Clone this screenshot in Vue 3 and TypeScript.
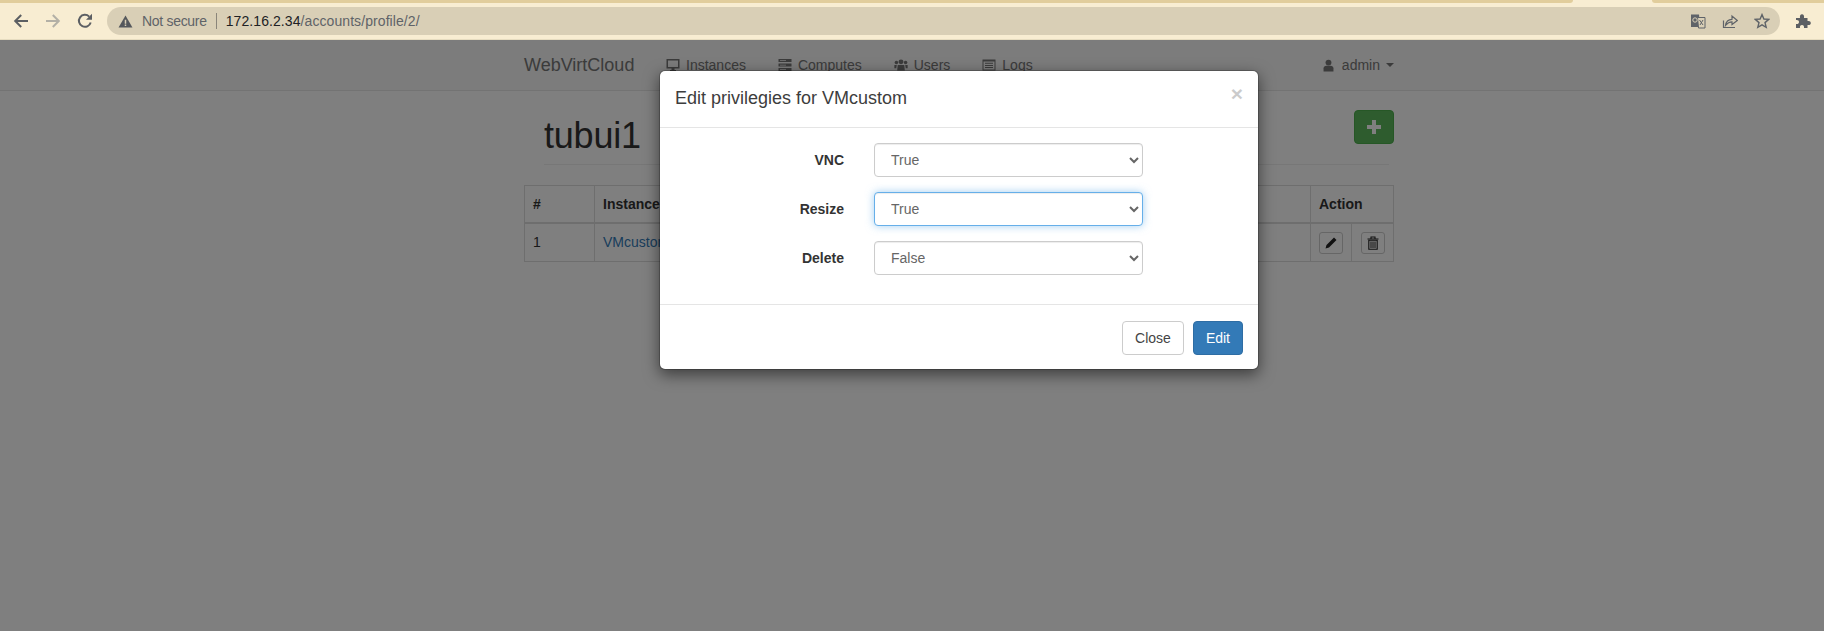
<script setup lang="ts">
import { ref } from "vue";

interface Privilege {
  label: string;
  value: string;
  focused?: boolean;
}

const url = { host: "172.16.2.34", path: "/accounts/profile/2/" };

const privileges = ref<Privilege[]>([
  { label: "VNC", value: "True" },
  { label: "Resize", value: "True", focused: true },
  { label: "Delete", value: "False" },
]);
</script>

<template>
  <div class="shot">
    <!-- browser toolbar -->
    <header class="chrome">
      <div class="chrome__strip">
        <span class="chrome__tab chrome__tab--left"></span>
        <span class="chrome__tab chrome__tab--right"></span>
      </div>
      <div class="chrome__bar">
        <svg class="tool" viewBox="0 0 16 16" width="16" height="16">
          <path d="M15 8H2.5M8.2 2L2.2 8L8.2 14" fill="none" stroke="#5c5f63" stroke-width="2" />
        </svg>
        <svg class="tool" viewBox="0 0 16 16" width="16" height="16">
          <path d="M1 8H13.5M7.8 2L13.8 8L7.8 14" fill="none" stroke="#b3b0a6" stroke-width="2" />
        </svg>
        <svg class="tool" viewBox="0 0 16 16" width="16" height="16">
          <path d="M13.7 9.5A6 6 0 1 1 12.2 3.6" fill="none" stroke="#5c5f63" stroke-width="2" />
          <path d="M15 0.8V6.8H9z" fill="#5c5f63" />
        </svg>
        <div class="omnibox">
          <svg viewBox="0 0 16 14" width="15" height="13">
            <path d="M8 0.5L15.5 13.5H0.5z" fill="#55585c" />
            <path d="M7.2 5H8.8V9.4H7.2zM7.2 10.2H8.8V11.8H7.2z" fill="#d9cfb6" />
          </svg>
          <span class="omnibox__note">Not secure</span>
          <span class="omnibox__sep"></span>
          <span class="omnibox__url"><b>{{ url.host }}</b>{{ url.path }}</span>
          <span class="omnibox__spacer"></span>
          <svg viewBox="0 0 16 16" width="16" height="16">
            <path d="M1 1.5H9L10 14H1z" fill="#5f6368" />
            <path d="M7.5 4.5H15V15H8.5z" fill="#d9cfb6" stroke="#5f6368" stroke-width="1" />
            <path d="M9.5 7L13 12M13 7L10 12" stroke="#5f6368" fill="none" />
            <circle cx="5" cy="7" r="2.2" fill="none" stroke="#d9cfb6" />
          </svg>
          <svg viewBox="0 0 16 16" width="16" height="16">
            <path d="M1.5 7.5V14.5H13" fill="none" stroke="#5f6368" stroke-width="1.2" />
            <path d="M3.5 12.5C4 8.5 6.5 6.5 10 6.3V3L15.3 7.5L10 11.5V8.8C7.5 8.8 5.5 10 3.5 12.5z" fill="none" stroke="#5f6368" stroke-width="1.2" />
          </svg>
          <svg viewBox="0 0 16 16" width="16" height="16">
            <path d="M8 1.6L9.9 6L14.7 6.4L11 9.6L12.2 14.3L8 11.8L3.8 14.3L5 9.6L1.3 6.4L6.1 6z" fill="none" stroke="#5f6368" stroke-width="1.4" />
          </svg>
        </div>
        <svg class="puzzle" viewBox="0 0 16 16" width="16" height="16">
          <path d="M1 5H5C4.6 2.8 5.4 1.2 7 1.2S9.4 2.8 9 5H12.5V8C14.6 7.6 15.8 8.4 15.8 10S14.6 12.4 12.5 12V15H9C9.3 13 8.5 12 7 12S4.7 13 5 15H1V11C3 11.3 4 10.4 4 9S3 6.7 1 7z" fill="#5c5f63" />
        </svg>
      </div>
    </header>

    <!-- page behind the dialog -->
    <main class="page">
      <nav class="navbar">
        <a class="navbar__brand">WebVirtCloud</a>
        <ul class="navbar__links">
          <li>
            <svg viewBox="0 0 14 14" width="14" height="14">
              <path d="M0.5 1H13.5V10.5H8.5V12H10V13.5H4V12H5.5V10.5H0.5zM2 2.5V9H12V2.5z" fill="#777" fill-rule="evenodd" />
            </svg>
            Instances
          </li>
          <li>
            <svg viewBox="0 0 14 14" width="14" height="14">
              <path d="M0.5 1H13.5V4H0.5zM0.5 5.5H13.5V8.5H0.5zM0.5 10H13.5V13H0.5z" fill="#777" />
              <path d="M2 2.2H8V2.9H2zM2 6.7H8V7.4H2zM2 11.2H8V11.9H2z" fill="#f8f8f8" />
            </svg>
            Computes
          </li>
          <li>
            <svg viewBox="0 0 15 14" width="14" height="14">
              <circle cx="7.5" cy="3.6" r="2.6" fill="#777" />
              <circle cx="2.6" cy="4.4" r="1.9" fill="#777" />
              <circle cx="12.4" cy="4.4" r="1.9" fill="#777" />
              <path d="M4 7H11L11.6 13H3.4zM0.4 7H3L2.4 10.5H0.4zM12 7H14.6V10.5H12.6z" fill="#777" />
            </svg>
            Users
          </li>
          <li>
            <svg viewBox="0 0 14 14" width="14" height="14">
              <path d="M0.5 1.5H13.5V12.5H0.5zM1.5 3.5V11.5H12.5V3.5z" fill="#777" fill-rule="evenodd" />
              <path d="M3 4.8H11V5.8H3zM3 6.9H11V7.9H3zM3 9H11V10H3z" fill="#777" />
            </svg>
            Logs
          </li>
        </ul>
        <div class="navbar__user">
          <svg viewBox="0 0 12 14" width="11" height="13">
            <circle cx="6" cy="3.8" r="3.2" fill="#777" />
            <path d="M0.6 13.5V10C0.6 8.4 2 7.4 3.6 7.4H8.4C10 7.4 11.4 8.4 11.4 10V13.5z" fill="#777" />
          </svg>
          <span>admin</span>
          <i class="caret"></i>
        </div>
      </nav>

      <section class="content">
        <div class="content__head">
          <h1>tubui1</h1>
          <button type="button" class="btn-add" aria-label="Add">
            <svg viewBox="0 0 14 14" width="14" height="14">
              <path d="M5 0H9V5H14V9H9V14H5V9H0V5H5z" fill="#fff" />
            </svg>
          </button>
        </div>
        <table class="grid">
          <colgroup>
            <col class="grid__col-num" />
            <col />
            <col class="grid__col-edit" />
            <col class="grid__col-delete" />
          </colgroup>
          <thead>
            <tr>
              <th>#</th>
              <th>Instance</th>
              <th colspan="2">Action</th>
            </tr>
          </thead>
          <tbody>
            <tr>
              <td>1</td>
              <td><a>VMcustom</a></td>
              <td class="grid__icon">
                <span class="btn-icon">
                  <svg viewBox="0 0 14 14" width="14" height="14">
                    <path d="M10 1.5L12.5 4L5 11.5L1.5 12.5L2.5 9z" fill="#222" />
                  </svg>
                </span>
              </td>
              <td class="grid__icon">
                <span class="btn-icon">
                  <svg viewBox="0 0 14 14" width="14" height="14">
                    <path d="M1.5 3H12.5M5 3V1H9V3" fill="none" stroke="#222" stroke-width="1.1" />
                    <path d="M2.8 4.2H11.2V13.2H2.8z" fill="none" stroke="#222" stroke-width="1.1" />
                    <path d="M5 5.5V12M7 5.5V12M9 5.5V12" stroke="#222" />
                  </svg>
                </span>
              </td>
            </tr>
          </tbody>
        </table>
      </section>

      <div class="backdrop"></div>

      <div class="modal" role="dialog">
        <div class="modal__header">
          <h4>Edit privilegies for VMcustom</h4>
          <span class="modal__close">×</span>
        </div>
        <form class="modal__body">
          <div v-for="p in privileges" :key="p.label" class="field">
            <label>{{ p.label }}</label>
            <select v-model="p.value" :class="{ 'is-focused': p.focused }">
              <option>True</option>
              <option>False</option>
            </select>
          </div>
        </form>
        <div class="modal__footer">
          <button type="button" class="btn">Close</button>
          <button type="button" class="btn btn--primary">Edit</button>
        </div>
      </div>
    </main>
  </div>
</template>

<style>
html,
body {
  margin: 0;
  background: #fff;
}
</style>

<style scoped>
.shot {
  width: 1824px;
  height: 631px;
  overflow: hidden;
  font-family: "Liberation Sans", Arial, sans-serif;
  font-size: 14px;
  line-height: 20px;
  color: #333;
}

.chrome {
  height: 40px;
  background: #f8edd2;
  box-sizing: border-box;
  border-bottom: 1px solid #e6dcc0;
}

.chrome__strip {
  display: flex;
  justify-content: space-between;
  height: 3px;
}

.chrome__tab {
  background: #e1cd9c;
}

.chrome__tab--left {
  width: 1573px;
  border-bottom-right-radius: 3px;
}

.chrome__tab--right {
  width: 172px;
  border-bottom-left-radius: 3px;
}

.chrome__bar {
  display: flex;
  align-items: center;
  height: 28px;
  margin-top: 4px;
  padding-left: 13px;
}

.tool {
  flex: none;
  margin-right: 16px;
}

.omnibox {
  display: flex;
  align-items: center;
  width: 1673px;
  height: 28px;
  margin-left: -2px;
  padding: 0 10px 0 11px;
  box-sizing: border-box;
  background: #d9cfb6;
  border-radius: 14px;
  font-size: 14px;
  color: #5f6368;
}

.omnibox__note {
  margin-left: 9px;
  letter-spacing: -0.3px;
}

.omnibox__sep {
  width: 1px;
  height: 16px;
  margin: 0 9px;
  background: #8a857a;
}

.omnibox__url {
  letter-spacing: 0.08px;
}

.omnibox__url b {
  font-weight: 400;
  color: #202124;
}

.omnibox__spacer {
  flex: 1;
}

.omnibox svg + svg {
  margin-left: 16px;
}

.puzzle {
  margin-left: 15px;
}

.page {
  position: relative;
  height: 591px;
  background: #fff;
}

.navbar {
  display: flex;
  align-items: center;
  height: 50px;
  padding: 0 430px 0 524px;
  background: #f8f8f8;
  border-bottom: 1px solid #e7e7e7;
  color: #777;
}

.navbar__brand {
  width: 142px;
  font-size: 18px;
}

.navbar__links {
  display: flex;
  flex: 1;
  gap: 32px;
  margin: 0;
  padding: 0;
  list-style: none;
}

.navbar__links li {
  display: flex;
  align-items: center;
  gap: 6px;
}

.navbar__user {
  display: flex;
  align-items: center;
}

.navbar__user span {
  margin-left: 8px;
}

.caret {
  width: 0;
  height: 0;
  margin-left: 6px;
  border-top: 4px solid #777;
  border-right: 4px solid transparent;
  border-left: 4px solid transparent;
}

.content {
  width: 870px;
  margin-left: 524px;
}

.content__head {
  display: flex;
  align-items: flex-start;
  justify-content: space-between;
  height: 73px;
  margin-left: 20px;
  margin-right: 5px;
  border-bottom: 1px solid #eee;
}

.content__head h1 {
  margin: 25px 0 0;
  font-size: 36px;
  font-weight: 500;
  line-height: 40px;
  letter-spacing: -0.2px;
}

.btn-add {
  display: flex;
  align-items: center;
  justify-content: center;
  width: 40px;
  height: 34px;
  margin: 19px -5px 0 0;
  padding: 0;
  background: #5cb85c;
  border: 1px solid #4cae4c;
  border-radius: 4px;
}

.grid {
  width: 100%;
  margin-top: 20px;
  border-collapse: collapse;
  table-layout: fixed;
}

.grid__col-num {
  width: 70px;
}

.grid__col-edit {
  width: 41px;
}

.grid__col-delete {
  width: 42px;
}

.grid th,
.grid td {
  padding: 8px;
  text-align: left;
  border: 1px solid #ddd;
  line-height: 20px;
}

.grid th {
  border-bottom-width: 2px;
  height: 20px;
  font-weight: 700;
}

.grid td {
  height: 21px;
  padding-top: 7px;
  padding-bottom: 9px;
}

.grid a {
  color: #337ab7;
}

.grid td.grid__icon {
  padding: 0;
  text-align: center;
}

.btn-icon {
  display: inline-flex;
  align-items: center;
  justify-content: center;
  width: 22px;
  height: 20px;
  vertical-align: middle;
  border: 1px solid #ccc;
  border-radius: 3px;
}

.backdrop {
  position: absolute;
  inset: 0;
  background: rgba(0, 0, 0, 0.5);
}

.modal {
  position: absolute;
  top: 30px;
  left: 659px;
  width: 600px;
  box-sizing: border-box;
  background: #fff;
  border: 1px solid rgba(0, 0, 0, 0.2);
  border-radius: 6px;
  box-shadow: 0 5px 15px rgba(0, 0, 0, 0.5);
  background-clip: padding-box;
}

.modal__header {
  display: flex;
  align-items: flex-start;
  justify-content: space-between;
  padding: 15px 15px 16px;
  border-bottom: 1px solid #e5e5e5;
}

.modal__header h4 {
  margin: 0;
  font-size: 18px;
  font-weight: 500;
  line-height: 25px;
  color: #3d3d3d;
}

.modal__close {
  margin-top: -3px;
  font-size: 21px;
  font-weight: 700;
  line-height: 21px;
  color: #000;
  opacity: 0.2;
}

.modal__body {
  display: grid;
  gap: 15px;
  padding: 15px 15px 29px;
}

.field {
  display: grid;
  grid-template-columns: 169px 269px;
  column-gap: 30px;
  align-items: center;
  height: 34px;
}

.field label {
  font-weight: 700;
  text-align: right;
}

.field select {
  width: 100%;
  height: 34px;
  padding: 6px 12px;
  font-family: inherit;
  font-size: 14px;
  color: #666;
  background: #fff;
  border: 1px solid #ccc;
  border-radius: 4px;
  box-shadow: inset 0 1px 1px rgba(0, 0, 0, 0.075);
}

.field select.is-focused {
  border-color: #66afe9;
  box-shadow: inset 0 1px 1px rgba(0, 0, 0, 0.075), 0 0 8px rgba(102, 175, 233, 0.6);
}

.modal__footer {
  display: flex;
  justify-content: flex-end;
  gap: 9px;
  padding: 16px 15px 14px;
  border-top: 1px solid #e5e5e5;
}

.btn {
  height: 34px;
  padding: 6px 12px;
  font-family: inherit;
  font-size: 14px;
  line-height: 20px;
  color: #444;
  background: #fff;
  border: 1px solid #ccc;
  border-radius: 4px;
}

.btn--primary {
  color: #fff;
  background: #337ab7;
  border-color: #2e6da4;
}
</style>
